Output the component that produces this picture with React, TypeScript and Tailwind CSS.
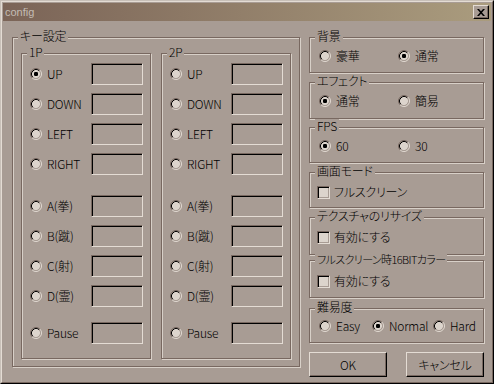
import React from 'react';

function Radio({ checked }: { checked?: boolean }) {
  return (
    <svg width="12" height="12" viewBox="0 0 12 12" className="shrink-0 block">
      <circle cx="6" cy="6" r="4.2" fill="#dcd4cc" />
      <path d="M2.11 9.89A5.5 5.5 0 0 1 9.89 2.11" stroke="#786860" fill="none" />
      <path d="M9.89 2.11A5.5 5.5 0 0 1 2.11 9.89" stroke="#e4dcd4" fill="none" />
      <path d="M2.82 9.18A4.5 4.5 0 0 1 9.18 2.82" stroke="#000" fill="none" />
      <path d="M9.18 2.82A4.5 4.5 0 0 1 2.82 9.18" stroke="#a89c94" fill="none" />
      {checked && <rect x="4" y="4" width="4" height="4" rx="1.2" fill="#000" />}
    </svg>
  );
}

function Check() {
  return (
    <div className="w-[13px] h-[13px] shrink-0 bg-[#dcd4cc] border border-t-[#786860] border-l-[#786860] border-r-[#e4dcd4] border-b-[#e4dcd4] shadow-[inset_1px_1px_0_#000,inset_-1px_-1px_0_#a89c94]" />
  );
}

function Legend({ children, small }: { children: React.ReactNode; small?: boolean }) {
  return (
    <div
      className={
        small
          ? 'absolute left-[5px] -top-[9px] px-[2px] bg-[#a89c94] leading-[14px] whitespace-nowrap text-[11px] tracking-[-0.6px]'
          : 'absolute left-[5px] -top-[9px] px-[2px] bg-[#a89c94] leading-[14px] whitespace-nowrap'
      }
    >
      {children}
    </div>
  );
}

function TextBox() {
  return (
    <div className="w-[52px] h-[22px] shrink-0 border border-t-[#786860] border-l-[#786860] border-r-[#e4dcd4] border-b-[#e4dcd4] shadow-[inset_1px_1px_0_#000]" />
  );
}

const keys: [string, number][] = [
  ['UP', 0],
  ['DOWN', 8],
  ['LEFT', 8],
  ['RIGHT', 8],
  ['A(拳)', 20],
  ['B(蹴)', 8],
  ['C(射)', 8],
  ['D(霊)', 8],
  ['Pause', 15],
];

function Player({ name, first }: { name: string; first?: boolean }) {
  return (
    <div className="relative w-[130px] h-[306px] border border-[#786860] shadow-[inset_1px_1px_0_#d8d0c8,1px_1px_0_#d8d0c8]">
      <Legend>{name}</Legend>
      <div className="flex flex-col pl-[8px] pr-[7px] pt-[9px]">
        {keys.map(([k, mt], i) => (
          <div key={k} className="flex items-center h-[22px]" style={{ marginTop: mt }}>
            <Radio checked={first && i === 0} />
            <span className="ml-[5px] flex-1">{k}</span>
            <TextBox />
          </div>
        ))}
      </div>
    </div>
  );
}

function Group({
  label,
  h,
  mt,
  cy,
  small,
  children,
}: {
  label: string;
  h: number;
  mt: number;
  cy: number;
  small?: boolean;
  children: React.ReactNode;
}) {
  return (
    <div
      className="relative w-[175px] shrink-0 border border-[#786860] shadow-[inset_1px_1px_0_#d8d0c8,1px_1px_0_#d8d0c8]"
      style={{ height: h, marginTop: mt }}
    >
      <Legend small={small}>{label}</Legend>
      <div className="flex items-center h-[14px]" style={{ marginTop: cy - 8 }}>
        {children}
      </div>
    </div>
  );
}

function RadioItem({ label, checked, w }: { label: string; checked?: boolean; w: number }) {
  return (
    <div className="flex items-center shrink-0 whitespace-nowrap" style={{ width: w }}>
      <Radio checked={checked} />
      <span className="ml-[5px]">{label}</span>
    </div>
  );
}

function CheckItem({ label }: { label: string }) {
  return (
    <div className="flex items-center pl-[7px]">
      <Check />
      <span className="ml-[4px]">{label}</span>
    </div>
  );
}

function Button({ children }: { children: React.ReactNode }) {
  return (
    <div className="w-[78px] h-[25px] flex items-center justify-center border border-t-[#e4dcd4] border-l-[#e4dcd4] border-r-black border-b-black shadow-[inset_-1px_-1px_0_#786860]">
      {children}
    </div>
  );
}

export default function App() {
  return (
    <div className="w-[494px] h-[384px] bg-[#a89c94] text-black text-[12px] leading-[14px] font-light tracking-[-0.2px] font-['Noto_Sans_CJK_JP',sans-serif] [font-feature-settings:'palt'] border border-t-[#c8c0b8] border-l-[#c8c0b8] border-r-black border-b-black">
      <div className="h-full flex flex-col p-[1px] border border-t-[#e4dcd4] border-l-[#e4dcd4] border-r-[#786860] border-b-[#786860]">
        <div className="h-[18px] shrink-0 flex items-center justify-between bg-linear-to-r from-[#7b6457] to-[#aa9c7e] pl-[2px] pr-[2px]">
          <span className="font-['Liberation_Sans',sans-serif] font-normal tracking-normal text-[11px] text-[#c4bcb4] leading-[14px]">config</span>
          <div className="w-[16px] h-[14px] bg-[#a89c94] flex items-center justify-center border border-t-[#e4dcd4] border-l-[#e4dcd4] border-r-black border-b-black shadow-[inset_-1px_-1px_0_#786860]">
            <svg width="8" height="7" viewBox="0 0 8 7" className="block">
              <path d="M0 0h2l2 2.2L6 0h2L5 3.5 8 7H6L4 4.8 2 7H0l3-3.5z" fill="#000" />
            </svg>
          </div>
        </div>
        <div className="flex pl-[9px] pt-[16px] gap-[9px]">
          <div className="relative w-[288px] h-[330px] shrink-0 border border-[#786860] shadow-[inset_1px_1px_0_#d8d0c8,1px_1px_0_#d8d0c8]">
            <Legend>キー設定</Legend>
            <div className="flex pl-[8px] pt-[15px] gap-[10px]">
              <Player name="1P" first />
              <Player name="2P" />
            </div>
          </div>
          <div className="flex flex-col w-[175px]">
            <Group label="背景" h={36} mt={0} cy={19}>
              <div className="pl-[9px] flex">
                <RadioItem label="豪華" w={79} />
                <RadioItem label="通常" checked w={80} />
              </div>
            </Group>
            <Group label="エフェクト" h={37} mt={9} cy={19}>
              <div className="pl-[9px] flex">
                <RadioItem label="通常" checked w={79} />
                <RadioItem label="簡易" w={80} />
              </div>
            </Group>
            <Group label="FPS" h={36} mt={8} cy={19}>
              <div className="pl-[9px] flex">
                <RadioItem label="60" checked w={79} />
                <RadioItem label="30" w={80} />
              </div>
            </Group>
            <Group label="画面モード" h={36} mt={9} cy={20}>
              <CheckItem label="フルスクリーン" />
            </Group>
            <Group label="テクスチャのリサイズ" h={38} mt={9} cy={20}>
              <CheckItem label="有効にする" />
            </Group>
            <Group label="フルスクリーン時16BITカラー" h={38} mt={5} cy={21} small>
              <CheckItem label="有効にする" />
            </Group>
            <Group label="難易度" h={35} mt={10} cy={18}>
              <div className="pl-[9px] flex">
                <RadioItem label="Easy" w={53} />
                <RadioItem label="Normal" checked w={61} />
                <RadioItem label="Hard" w={50} />
              </div>
            </Group>
            <div className="flex gap-[19px] mt-[9px]">
              <Button>OK</Button>
              <Button>キャンセル</Button>
            </div>
          </div>
        </div>
      </div>
    </div>
  );
}
